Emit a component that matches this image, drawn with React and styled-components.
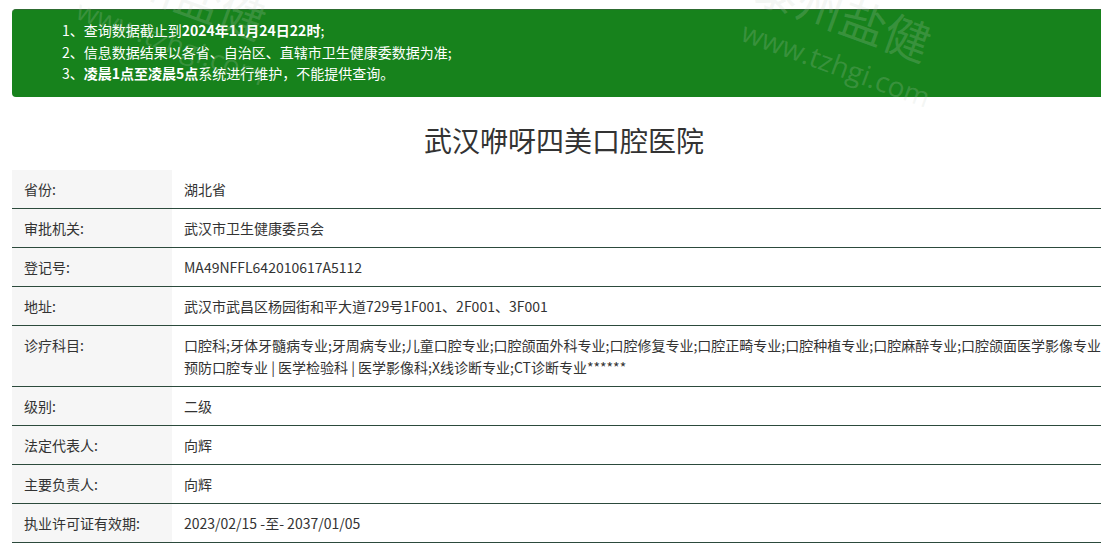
import React from 'react';
import styled, { createGlobalStyle } from 'styled-components';

const GlobalStyle = createGlobalStyle`
  html, body {
    margin: 0;
    padding: 0;
    background: #fff;
    overflow: hidden;
  }
  body {
    font-family: "Noto Sans CJK SC", "Noto Sans", sans-serif;
    color: #333;
  }
`;

const Page = styled.div`
  position: relative;
  width: 1112px;
  margin-left: 12px;
  padding-top: 9px;
`;

const Notice = styled.div`
  background: #17821c;
  border-top: 1px solid #2d6b30;
  border-radius: 4px 0 0 4px;
  padding: 10px 0 12px 50px;
  color: #fff;
  font-size: 14px;
  line-height: 21.5px;

  p { margin: 0; }
  b { font-weight: 700; }
`;

const Title = styled.h1`
  margin: 0;
  padding: 24px 8px 10px 0;
  text-align: center;
  font-size: 28px;
  line-height: 39px;
  font-weight: 400;
  color: #333;
`;

const Table = styled.div`
  display: flex;
  flex-direction: column;
`;

const Row = styled.div`
  display: grid;
  grid-template-columns: 160px 1fr;
  border-bottom: 1px solid #2c4a3c;
  font-size: 14px;
  line-height: 22px;
`;

const Label = styled.div`
  background: #f6f6f6;
  padding: 8px 12px;
  color: #333;
`;

const Value = styled.div`
  padding: 8px 12px;
  color: #333;
`;

const Watermark = styled.div`
  position: absolute;
  left: ${p => p.$x}px;
  top: ${p => p.$y}px;
  transform: rotate(20deg);
  transform-origin: left top;
  pointer-events: none;
  color: rgba(200, 212, 200, 0.2);
  font-family: "Open Sans", "Noto Sans CJK SC", sans-serif;
  white-space: nowrap;

  div:first-child {
    font-family: "Noto Sans CJK SC", sans-serif;
    font-size: 46px;
    line-height: 68px;
    margin-left: -4px;
  }
  div:last-child {
    font-size: 28px;
    line-height: 34px;
  }
`;

const rows = [
  ['省份:', '湖北省'],
  ['审批机关:', '武汉市卫生健康委员会'],
  ['登记号:', 'MA49NFFL642010617A5112'],
  ['地址:', '武汉市武昌区杨园街和平大道729号1F001、2F001、3F001'],
  ['诊疗科目:', '口腔科;牙体牙髓病专业;牙周病专业;儿童口腔专业;口腔颌面外科专业;口腔修复专业;口腔正畸专业;口腔种植专业;口腔麻醉专业;口腔颌面医学影像专业;预防口腔专业 | 医学检验科 | 医学影像科;X线诊断专业;CT诊断专业******'],
  ['级别:', '二级'],
  ['法定代表人:', '向辉'],
  ['主要负责人:', '向辉'],
  ['执业许可证有效期:', '2023/02/15 -至- 2037/01/05'],
];

export default function App() {
  return (
    <>
      <GlobalStyle />
      <Page>
        <Notice>
          <p>1、查询数据截止到<b>2024年11月24日22时</b>;</p>
          <p>2、信息数据结果以各省、自治区、直辖市卫生健康委数据为准;</p>
          <p>3、<b>凌晨1点至凌晨5点</b>系统进行维护，不能提供查询。</p>
        </Notice>
        <Title>武汉咿呀四美口腔医院</Title>
        <Table>
          {rows.map(([k, v]) => (
            <Row key={k}>
              <Label>{k}</Label>
              <Value>{v}</Value>
            </Row>
          ))}
        </Table>
        <Watermark $x={95} $y={-72}>
          <div>泰州盐健</div>
          <div>www.tzhgi.com</div>
        </Watermark>
        <Watermark $x={760} $y={-50}>
          <div>泰州盐健</div>
          <div>www.tzhgi.com</div>
        </Watermark>
      </Page>
    </>
  );
}
